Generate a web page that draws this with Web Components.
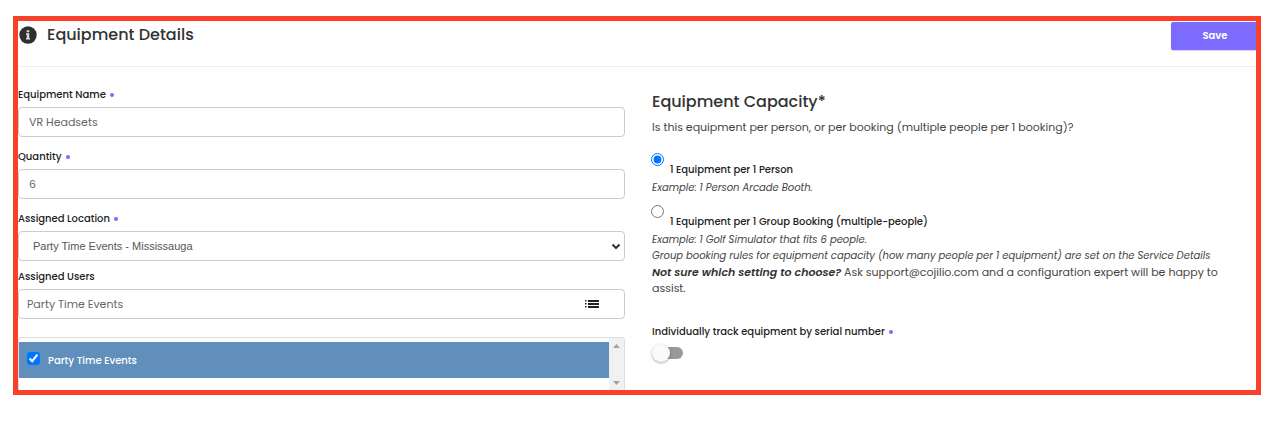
<!DOCTYPE html>
<html lang="en">
<head>
<meta charset="utf-8">
<title>Equipment Details</title>
<style>
  body { margin: 16px 16px 16px 13px; background: #fff; color: #333; font: 11px/16px Poppins, Inter, sans-serif; }
</style>
</head>
<body>
<equipment-page></equipment-page>

<script>
const define = (name, render, setup) => customElements.define(name, class extends HTMLElement {
  constructor() {
    super();
    this.attachShadow({ mode: 'open' });
  }
  connectedCallback() {
    this.shadowRoot.innerHTML = render(name => this.getAttribute(name) ?? '');
    if (setup) setup(this);
  }
});

const labelStyles = `
  * { box-sizing: border-box; }
  label { display: flex; align-items: center; gap: 4px; font-size: 10px; line-height: 18px; font-weight: 500; color: #222; }
  .dot { width: 4px; height: 4px; border-radius: 50%; background: #7b6cff; }
`;
const dot = a => a('required') ? '<span class="dot"></span>' : '';

/* Red framed card that holds header and body */
define('framed-panel', () => `
  <style>
    :host { display: block; border: 5px solid #f9402a; overflow: hidden; background: #fff; }
  </style>
  <slot></slot>`);

define('panel-header', () => `
  <style>
    :host { display: flex; align-items: flex-start; justify-content: space-between; height: 46px; padding-top: 1px; box-sizing: border-box; border-bottom: 1px solid #eee; }
    .title { display: flex; align-items: center; gap: 10px; padding: 1px 0 0 1px; }
    svg { display: block; }
    h1 { margin: 0; font-size: 16px; line-height: 24px; font-weight: 500; color: #333; }
  </style>
  <div class="title">
    <svg width="18" height="18" viewBox="0 0 18 18" aria-hidden="true">
      <circle cx="9" cy="9" r="8.700" fill="#2f2f2f"/>
      <path fill="#ddd" d="M7.700 4.300h2.500v2H7.700zM7 7.200h3.200v4.800h.8v1.500H7V12h.8V8.700H7z"/>
    </svg>
    <h1><slot></slot></h1>
  </div>
  <slot name="action"></slot>`);

define('primary-button', () => `
  <style>
    :host { display: block; }
    button { display: block; width: 85px; height: 28px; padding: 0 0 0 3px; border: 0; border-radius: 2px 0 0 2px; background: #7b6cff; color: #fff; font: 600 10px/18px Poppins, Inter, sans-serif; box-shadow: 0 1px 1px #d5d0ff; }
  </style>
  <button type="button"><slot></slot></button>`);

define('text-field', a => `
  <style>
    ${labelStyles}
    :host { display: flex; flex-direction: column; gap: 3px; }
    .box { display: flex; align-items: center; height: 30px; border: 1px solid #ccc; border-radius: 4px; padding-right: 25px; }
    input { flex: 1; min-width: 0; height: 28px; padding: 0 0 0 var(--inset, 10px); border: 0; outline: 0; background: none; color: #666; font: 11px/18px Poppins, Inter, sans-serif; }
  </style>
  <label for="field">${a('label')}${dot(a)}</label>
  <div class="box"><input id="field" type="text" value="${a('value')}"><slot></slot></div>`);

define('list-icon', () => `
  <style>:host { display: block; } svg { display: block; }</style>
  <svg width="14" height="8" viewBox="0 0 14 8" aria-hidden="true" fill="#222">
    <path d="M0 0h1.500v1.500H0zM0 3h1.500v1.500H0zM0 6h1.500v1.500H0zM3 0h11v2H3zM3 3h11v2H3zM3 6h11v2H3z"/>
  </svg>`);

define('select-field', a => `
  <style>
    ${labelStyles}
    :host { display: flex; flex-direction: column; gap: 3px; }
    .box { position: relative; }
    select { display: block; width: 100%; height: 30px; padding: 0 24px 0 14px; appearance: none; border: 1px solid #ccc; border-radius: 4px; background: #fff; color: #555; font: 11px/18px "Liberation Sans", Arial, sans-serif; }
    svg { position: absolute; right: 4px; top: 12px; pointer-events: none; }
  </style>
  <label for="field">${a('label')}${dot(a)}</label>
  <div class="box">
    <select id="field"><option>${a('value')}</option></select>
    <svg width="10" height="7" viewBox="0 0 10 7" aria-hidden="true"><path d="M1.500 1.500 5 5l3.500-3.500" fill="none" stroke="#333" stroke-width="2"/></svg>
  </div>`);

define('user-list', () => `
  <style>
    :host { display: flex; height: 53px; box-sizing: border-box; border: 1px solid #ddd; border-bottom: 0; border-radius: 4px 4px 0 0; overflow: hidden; }
    .rows { flex: 1; padding-top: 4px; }
    .bar { width: 15px; box-sizing: border-box; padding: 6px 0 5px; display: flex; flex-direction: column; align-items: center; justify-content: space-between; background: #f1f1f1; }
  </style>
  <div class="rows"><slot></slot></div>
  <div class="bar" aria-hidden="true">
    <svg width="7" height="4" viewBox="0 0 7 4"><path d="M3.500 0 7 4H0z" fill="#a3a3a3"/></svg>
    <svg width="7" height="4" viewBox="0 0 7 4"><path d="M0 0h7L3.500 4z" fill="#a3a3a3"/></svg>
  </div>`);

define('user-row', () => `
  <style>
    :host { display: block; background: #5f8fba; }
    label { display: flex; align-items: center; gap: 8px; height: 36px; padding-left: 8px; color: #fff; font-size: 10px; font-weight: 500; line-height: 18px; }
    input { flex: none; width: 13px; height: 13px; margin: 0 0 3px; accent-color: #0075ff; }
    span { padding-top: 2px; }
  </style>
  <label><input type="checkbox" checked><span><slot></slot></span></label>`);

/* Radios sit in separate shadow roots, so each one clears its siblings when chosen */
define('radio-option', a => `
  <style>
    :host { display: block; }
    label { display: flex; align-items: flex-start; gap: 6px; height: 26px; font-size: 10px; font-weight: 500; line-height: 18px; color: #222; }
    input { flex: none; width: 13px; height: 13px; margin: 1px 0 0 -1px; accent-color: #0075ff; }
    span { padding-top: 9px; }
    p { margin: 2px 0 0; font-size: 10px; line-height: 16px; font-style: italic; color: #444; }
  </style>
  <label><input type="radio" ${a('selected') ? 'checked' : ''}><span>${a('label')}</span></label>
  <p><slot></slot></p>`, host => {
    host.shadowRoot.querySelector('input').addEventListener('change', () => {
      for (const other of host.parentNode.querySelectorAll('radio-option'))
        if (other !== host) other.shadowRoot.querySelector('input').checked = false;
    });
  });

define('toggle-field', a => `
  <style>
    ${labelStyles}
    :host { display: flex; flex-direction: column; align-items: flex-start; gap: 3px; }
    input { appearance: none; display: flex; align-items: center; width: 31px; height: 18px; margin: 0; }
    input::before { content: ""; width: 18px; height: 18px; border-radius: 50%; background: #fafafa; box-shadow: 0 1px 3px #0005; z-index: 1; }
    input::after { content: ""; width: 17px; height: 12px; margin-left: -4px; border-radius: 0 6px 6px 0; background: #999; }
    input:checked { flex-direction: row-reverse; }
  </style>
  <label for="field">${a('label')}${dot(a)}</label>
  <input id="field" type="checkbox" role="switch">`);

define('equipment-form', () => `
  <style>
    :host { display: flex; flex-direction: column; padding-top: 19px; gap: 11px; min-width: 0; }
    .users { display: flex; flex-direction: column; gap: 18px; margin-top: -4px; }
    .users text-field { --inset: 8px; }
  </style>
  <text-field label="Equipment Name" required="true" value="VR Headsets"></text-field>
  <text-field label="Quantity" required="true" value="6"></text-field>
  <select-field label="Assigned Location" required="true" value="Party Time Events - Mississauga"></select-field>
  <div class="users">
    <text-field label="Assigned Users" value="Party Time Events"><list-icon></list-icon></text-field>
    <user-list><user-row>Party Time Events</user-row></user-list>
  </div>`);

define('capacity-form', () => `
  <style>
    :host { display: block; padding: 23px 16px 0 0; min-width: 0; }
    h2 { margin: 0; font-size: 16px; line-height: 24px; font-weight: 500; color: #333; }
    .intro { margin: 4px 0 16px; line-height: 18px; color: #444; }
    .options { display: flex; flex-direction: column; gap: 8px; }
    .help { margin: 0 0 27px; color: #444; }
    .help strong { font-weight: 600; font-style: italic; color: #333; }
  </style>
  <h2>Equipment Capacity*</h2>
  <p class="intro">Is this equipment per person, or per booking (multiple people per 1 booking)?</p>
  <div class="options">
    <radio-option label="1 Equipment per 1 Person" selected="true">Example: 1 Person Arcade Booth.</radio-option>
    <radio-option label="1 Equipment per 1 Group Booking (multiple-people)">Example: 1 Golf Simulator that fits 6 people.<br>Group booking rules for equipment capacity (how many people per 1 equipment) are set on the Service Details</radio-option>
  </div>
  <p class="help"><strong>Not sure which setting to choose?</strong> Ask support@cojilio.com and a configuration expert will be happy to assist.</p>
  <toggle-field label="Individually track equipment by serial number" required="true"></toggle-field>`);

define('equipment-page', () => `
  <style>
    :host { display: block; }
    .columns { display: grid; grid-template-columns: minmax(0, 607fr) minmax(0, 604fr); gap: 27px; }
  </style>
  <framed-panel>
    <panel-header>Equipment Details<primary-button slot="action">Save</primary-button></panel-header>
    <div class="columns">
      <equipment-form></equipment-form>
      <capacity-form></capacity-form>
    </div>
  </framed-panel>`);
</script>
</body>
</html>
